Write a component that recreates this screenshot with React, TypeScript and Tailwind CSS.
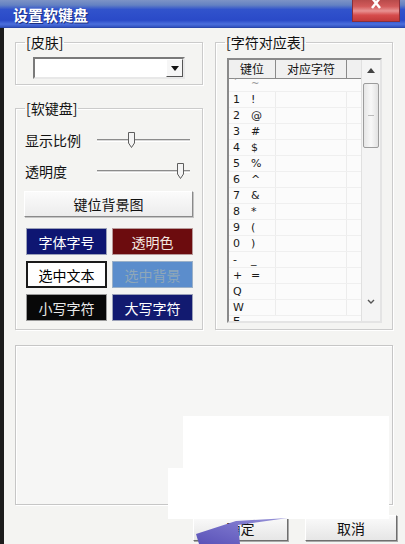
import React from "react";

const CJK = "font-['Noto_Sans_CJK_SC','Noto_Sans',sans-serif]";

function Slider({ thumb }: { thumb: string }) {
  return (
    <div className="relative w-[93px] h-[20px] flex items-center">
      <div className="w-full h-[3px] border-t border-t-[#8c8c8c] border-b border-b-white bg-[#d8d8d8]" />
      <svg
        className={"absolute top-[2px] " + thumb}
        width="9"
        height="17"
        viewBox="0 0 9 17"
      >
        <path d="M1.5 0.5 H7.5 V11 L4.5 15.5 L1.5 11 Z" fill="#f4f4f4" stroke="#5e5e5e" strokeWidth="1" />
      </svg>
    </div>
  );
}

function ColorBtn({ label, cls }: { label: string; cls: string }) {
  return (
    <div
      className={
        "h-[27px] w-[81px] flex items-center justify-center text-[14px] leading-none " + cls
      }
    >
      {label}
    </div>
  );
}

const rows: [string, string][] = [
  ["1", "!"],
  ["2", "@"],
  ["3", "#"],
  ["4", "$"],
  ["5", "%"],
  ["6", "^"],
  ["7", "&"],
  ["8", "*"],
  ["9", "("],
  ["0", ")"],
  ["-", "_"],
  ["+", "="],
  ["Q", ""],
  ["W", ""],
];

function Row({ a, b }: { a: string; b: string }) {
  return (
    <div className="flex h-[16px] border-b border-[#efefef] font-['DejaVu_Sans',sans-serif] text-[11px] leading-[16px]">
      <div className="w-[47px] flex border-r border-[#ececec] text-[#1a1a1a]">
        <span className="w-[22px] pl-[4px]">{a}</span>
        <span>{b}</span>
      </div>
      <div className="w-[71px] border-r border-[#ececec]" />
      <div className="flex-1" />
    </div>
  );
}

export default function App() {
  return (
    <div className={"relative w-[405px] h-[544px] overflow-hidden bg-[#f4f4f2] text-[#111] " + CJK}>
      {/* Title bar */}
      <div className="h-[28px] flex items-start bg-[linear-gradient(180deg,#7d93c6_0%,#6482c2_18%,#3153cc_34%,#2a4ac8_72%,#4b6fdc_86%,#3556c4_95%,#24409e_100%)]">
        <div className="pl-[13px] pt-[6px] text-[15px] leading-[18px] font-bold text-white [text-shadow:1px_1px_0_#1b2f80]">
          设置软键盘
        </div>
        <div className="ml-auto mr-[5px] w-[48px] h-[22px] flex justify-center bg-[linear-gradient(180deg,#b84a4a_0%,#d25a5a_30%,#e89292_52%,#d64c4c_72%,#c23a3a_100%)] border-x border-b border-[#8a2f3a]">
          <svg width="14" height="10" viewBox="0 0 14 10">
            <path d="M3 -2 L11 8 M11 -2 L3 8" stroke="white" strokeWidth="2.5" />
          </svg>
        </div>
      </div>

      {/* Body */}
      <div className="flex h-[516px]">
        <div className="w-[4px] bg-[#1c1c1c]" />
        <div className="flex-1 pl-[11px] pt-[7px] flex flex-col">
          <div className="flex gap-[12px] h-[295px]">
            {/* Left column */}
            <div className="w-[188px] flex flex-col gap-[16px]">
              <fieldset className="h-[50px] border border-[#cbcbcb] shadow-[inset_1px_1px_0_#ffffff,1px_1px_0_#ffffff]">
                <legend className="ml-[9px] px-[1px] text-[14px] leading-[14px]">[皮肤]</legend>
                <div className="pl-[17px] pt-[8px]">
                  <div className="w-[152px] h-[22px] flex bg-white border-2 border-t-[#7a7a7a] border-l-[#7a7a7a] border-r-[#e8e8e8] border-b-[#e8e8e8]">
                    <div className="flex-1" />
                    <div className="w-[17px] h-full flex items-center justify-center bg-[#f6f6f6] border border-t-white border-l-white border-r-[#555] border-b-[#555]">
                      <svg width="8" height="5" viewBox="0 0 8 5">
                        <path d="M0 0 H8 L4 5 Z" fill="#111" />
                      </svg>
                    </div>
                  </div>
                </div>
              </fieldset>

              <fieldset className="flex-1 border border-[#cbcbcb] shadow-[inset_1px_1px_0_#ffffff,1px_1px_0_#ffffff]">
                <legend className="ml-[9px] px-[1px] text-[14px] leading-[14px]">[软键盘]</legend>
                <div className="pl-[8px] pt-[15px] flex flex-col">
                  <div className="flex items-center h-[20px] pl-[1px]">
                    <span className="w-[72px] text-[14px] leading-none">显示比例</span>
                    <Slider thumb="left-[30px]" />
                  </div>
                  <div className="flex items-center h-[20px] pl-[1px] mt-[11px]">
                    <span className="w-[72px] text-[14px] leading-none">透明度</span>
                    <Slider thumb="left-[79px]" />
                  </div>
                  <div className="mt-[10px] w-[169px] h-[26px] flex items-center justify-center text-[14px] leading-none bg-[linear-gradient(180deg,#fbfbfb,#ececec)] border border-t-white border-l-white border-r-[#8a8a8a] border-b-[#8a8a8a] shadow-[1px_1px_0_#c4c4c4]">
                    键位背景图
                  </div>
                  <div className="mt-[11px] pl-[2px] grid grid-cols-[81px_81px] gap-x-[5px] gap-y-[6px]">
                    <ColorBtn label="字体字号" cls="bg-[#0e1672] text-white border border-[#9aa0b8]" />
                    <ColorBtn label="透明色" cls="bg-[#6c0c0e] text-[#f4e8e0] border border-[#b89a9a]" />
                    <ColorBtn label="选中文本" cls="bg-white text-black border-2 border-[#1a1a1a]" />
                    <ColorBtn label="选中背景" cls="bg-[#5b8dcc] text-[#8fa7b8] border border-[#9ab0c8]" />
                    <ColorBtn label="小写字符" cls="bg-[#080808] text-[#e8e8e8] border border-[#9a9a9a]" />
                    <ColorBtn label="大写字符" cls="bg-[#121a70] text-white border border-[#9aa0b8]" />
                  </div>
                </div>
              </fieldset>
            </div>

            {/* Right column */}
            <fieldset className="w-[178px] h-full border border-[#cbcbcb] shadow-[inset_1px_1px_0_#ffffff,1px_1px_0_#ffffff]">
              <legend className="ml-[9px] px-[1px] text-[14px] leading-[14px]">[字符对应表]</legend>
              <div className="pl-[11px] pt-[9px]">
                <div className="w-[155px] h-[265px] flex bg-[#fbfbfb] border-2 border-t-[#8a8a8a] border-l-[#8a8a8a] border-r-[#e4e4e4] border-b-[#e4e4e4] overflow-hidden">
                  <div className="flex-1 flex flex-col overflow-hidden">
                    <div className="h-[19px] shrink-0 flex items-center bg-[#f0f0f0] border-b border-[#8a8a8a] text-[12px] leading-[12px]">
                      <div className="w-[47px] h-full flex items-center justify-center border-r border-[#8a8a8a]">键位</div>
                      <div className="w-[71px] h-full flex items-center justify-center border-r border-[#8a8a8a]">对应字符</div>
                      <div className="flex-1" />
                    </div>
                    <div className="h-[13px] shrink-0 flex font-['DejaVu_Sans',sans-serif] text-[10px] leading-[10px] text-[#9a9a9a] border-b border-[#efefef]">
                      <span className="w-[22px] pl-[4px]">`</span>
                      <span>~</span>
                    </div>
                    {rows.map(([a, b]) => (
                      <Row key={a} a={a} b={b} />
                    ))}
                    <div className="h-[6px] overflow-hidden font-['DejaVu_Sans',sans-serif] text-[11px] leading-[11px] pl-[4px] text-[#1a1a1a]">
                      E
                    </div>
                  </div>
                  <div className="w-[19px] flex flex-col items-center bg-[#f4f4f4] border-l border-[#e0e0e0]">
                    <div className="h-[20px] w-full flex items-center justify-center">
                      <svg width="8" height="5" viewBox="0 0 8 5">
                        <path d="M0 5 L4 0 L8 5 Z" fill="#444" />
                      </svg>
                    </div>
                    <div className="mt-[3px] w-[16px] h-[65px] rounded-[2px] border border-[#9c9c9c] bg-[linear-gradient(90deg,#e6e6e6,#f8f8f8,#e2e2e2)] flex items-center justify-center">
                      <div className="w-[6px] h-[1px] bg-[#bbb]" />
                    </div>
                    <div className="flex-1" />
                    <div className="h-[22px] flex items-start justify-center">
                      <svg width="8" height="6" viewBox="0 0 8 6">
                        <path d="M1 1 L4 4 L7 1" stroke="#555" strokeWidth="1.4" fill="none" />
                      </svg>
                    </div>
                  </div>
                </div>
              </div>
            </fieldset>
          </div>

          {/* Bottom panel */}
          <div className="mt-[15px] w-[378px] h-[160px] border border-[#c6c6c6] shadow-[inset_1px_1px_0_#ffffff,1px_1px_0_#ffffff] bg-[#f6f6f5]" />

          {/* Buttons */}
          <div className="mt-[10px] pl-[178px] flex gap-[17px]">
            <div className="w-[95px] h-[26px] flex items-center justify-center text-[14px] leading-none bg-[linear-gradient(180deg,#fbfbfb,#e6e6e6)] border border-t-white border-l-white border-r-[#6e6e6e] border-b-[#6e6e6e] shadow-[1px_1px_0_#a8a8a8]">
              确定
            </div>
            <div className="w-[92px] h-[26px] flex items-center justify-center text-[14px] leading-none bg-[linear-gradient(180deg,#fbfbfb,#e6e6e6)] border border-t-white border-l-white border-r-[#6e6e6e] border-b-[#6e6e6e] shadow-[1px_1px_0_#a8a8a8]">
              取消
            </div>
          </div>
        </div>
      </div>

      {/* Watermark overlays */}
      <div className="absolute left-[183px] top-[416px] w-[206px] h-[103px] bg-white" />
      <div className="absolute left-[168px] top-[468px] w-[16px] h-[51px] bg-white" />
      <svg className="absolute left-[190px] top-[516px]" width="100" height="28" viewBox="0 0 100 28">
        <defs>
          <linearGradient id="sw" x1="0" y1="1" x2="1" y2="0">
            <stop offset="0" stopColor="#5a52b8" />
            <stop offset="0.6" stopColor="#7a74cc" />
            <stop offset="1" stopColor="#9a96d8" />
          </linearGradient>
        </defs>
        <path d="M6 18 L46 5 L98 2 L48 9 L50 28 L9 28 Z" fill="url(#sw)" />
      </svg>
    </div>
  );
}
